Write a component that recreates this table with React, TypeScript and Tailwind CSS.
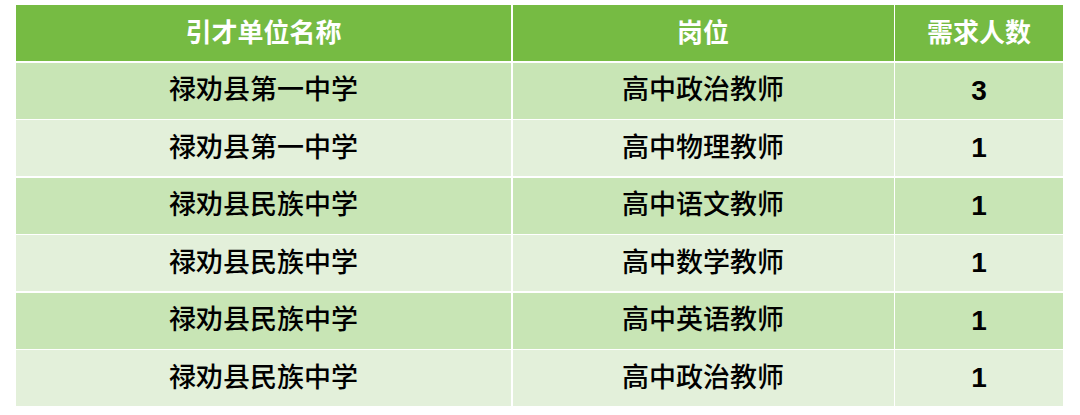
import React from "react";

const rows: [string, string, string][] = [
  ["禄劝县第一中学", "高中政治教师", "3"],
  ["禄劝县第一中学", "高中物理教师", "1"],
  ["禄劝县民族中学", "高中语文教师", "1"],
  ["禄劝县民族中学", "高中数学教师", "1"],
  ["禄劝县民族中学", "高中英语教师", "1"],
  ["禄劝县民族中学", "高中政治教师", "1"],
];

const font = { fontFamily: '"Liberation Sans", "Noto Sans CJK SC", sans-serif' };

export default function App() {
  return (
    <div className="w-[1080px] h-[415px] bg-white pt-[5px] pl-[16px]" style={font}>
      <div className="w-[1047px] grid grid-cols-[495px_381px_168px] auto-rows-[56px] gap-[1.5px] bg-white">
        <div className="bg-[#76bb43] flex items-center justify-center text-white text-[26px] font-bold">引才单位名称</div>
        <div className="bg-[#76bb43] flex items-center justify-center text-white text-[26px] font-bold">岗位</div>
        <div className="bg-[#76bb43] flex items-center justify-center text-white text-[26px] font-bold">需求人数</div>
        {rows.map((r, i) => {
          const bg = i % 2 === 0 ? "bg-[#c8e5b5]" : "bg-[#e3f0da]";
          return (
            <React.Fragment key={i}>
              <div className={`${bg} flex items-center justify-center text-black text-[27px] font-medium`}>{r[0]}</div>
              <div className={`${bg} flex items-center justify-center text-black text-[27px] font-medium`}>{r[1]}</div>
              <div className={`${bg} flex items-center justify-center text-black text-[28px] font-bold`}>{r[2]}</div>
            </React.Fragment>
          );
        })}
      </div>
    </div>
  );
}
